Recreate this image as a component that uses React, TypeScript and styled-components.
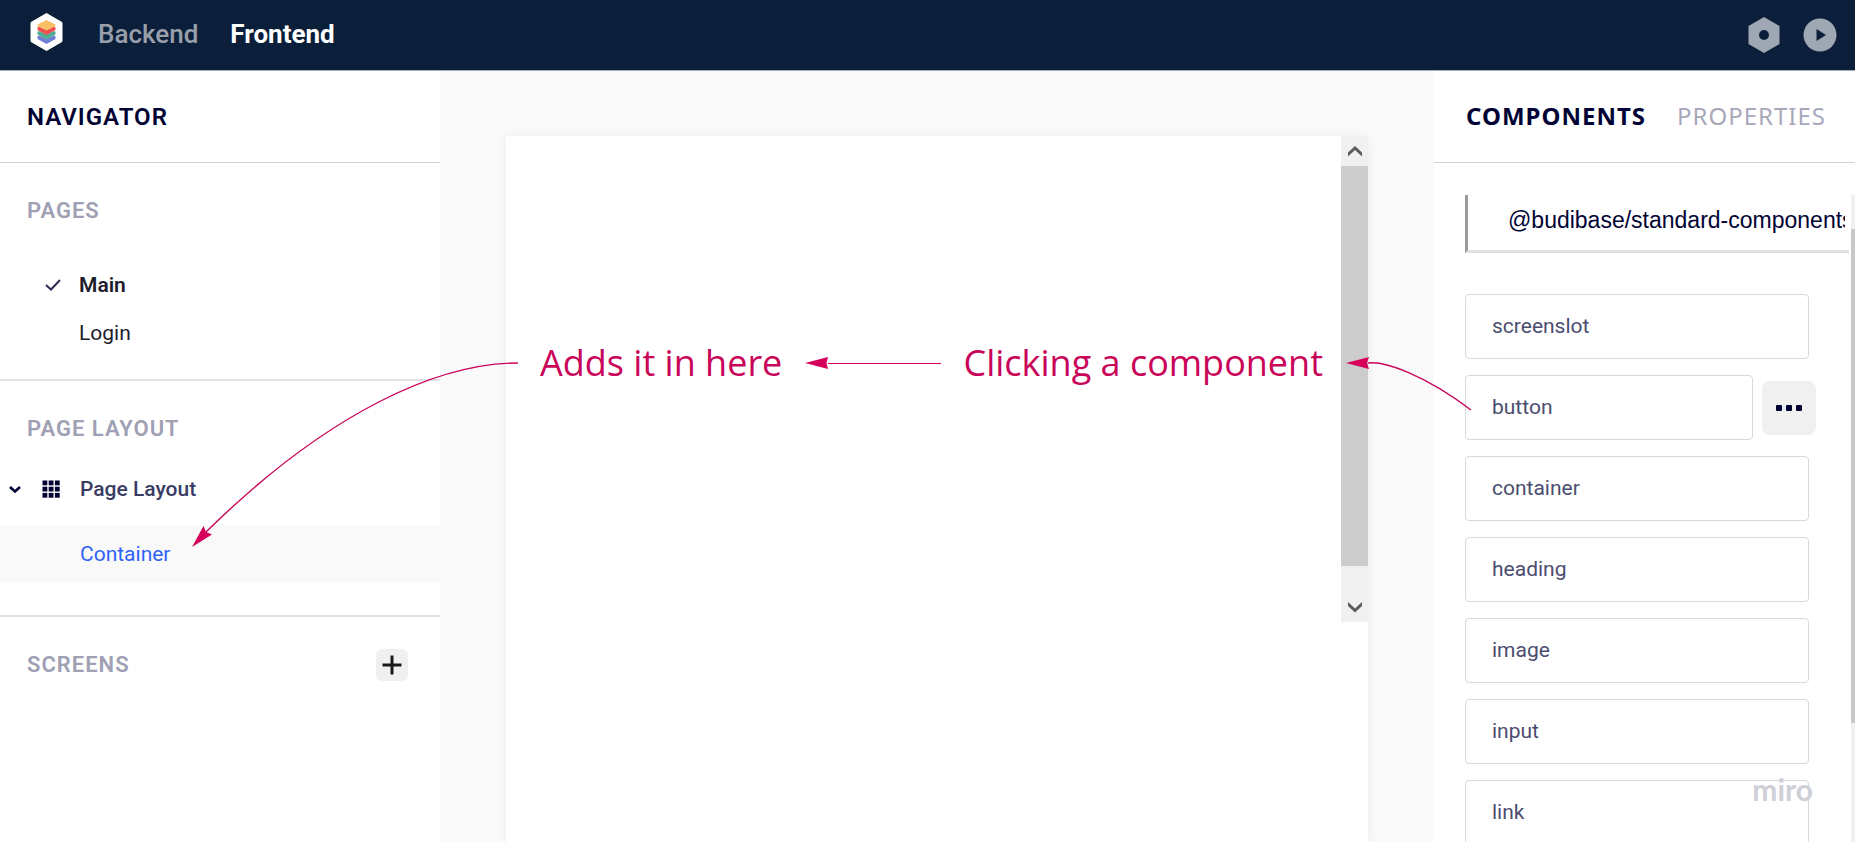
import React from 'react';
import styled, { createGlobalStyle } from 'styled-components';

const ink = '#000333';
const line = '#d8d8d8';
const pink = '#d6005c';
const pinkText = '#c9055a';

const GlobalStyle = createGlobalStyle`
  *, *::before, *::after { box-sizing: border-box; }
  body {
    margin: 0;
    font-family: Roboto, sans-serif;
    color: ${ink};
    background: #fafafa;
  }
  button, select { font: inherit; color: inherit; margin: 0; }
  button { border: 0; background: none; padding: 0; cursor: pointer; }
  h2, ul { margin: 0; padding: 0; list-style: none; }
`;

const Page = styled.div`
  position: relative;
  display: flex;
  flex-direction: column;
  height: 100vh;
  overflow: hidden;
`;

const TopBar = styled.header`
  display: flex;
  align-items: center;
  flex: none;
  height: 71px;
  padding: 0 18px 0 30px;
  background: #0c1f3a;
  border-bottom: 1px solid #a3adbd;
`;

const LogoLink = styled.a`
  display: flex;
  height: 38px;
  margin-right: 35px;
  margin-bottom: 6px;
`;

const TopNav = styled.nav`
  display: flex;
  flex: 1;
  gap: 32px;
  padding-bottom: 2px;
`;

const TopLink = styled.a<{ $active?: boolean }>`
  font-size: 26px;
  line-height: 32px;
  font-weight: ${p => (p.$active ? 700 : 500)};
  color: ${p => (p.$active ? '#ffffff' : '#989fab')};
  text-decoration: none;
`;

const TopActions = styled.div`
  display: flex;
  align-items: center;
  gap: 23px;
`;

const IconButton = styled.button`
  display: flex;
`;

const Body = styled.div`
  display: flex;
  flex: 1;
  min-height: 0;
`;

const Sidebar = styled.aside`
  flex: none;
  width: 440px;
  background: #ffffff;
`;

const PanelHead = styled.div`
  display: flex;
  align-items: center;
  height: 92px;
  padding: 0 27px;
  border-bottom: 1px solid #d2d2d2;
`;

const PanelTitle = styled.h2`
  font-size: 24px;
  line-height: 32px;
  font-weight: 600;
  letter-spacing: 1px;
`;

const Section = styled.section`
  border-bottom: 2px solid #e2e2e2;
  &:last-child { border-bottom: 0; }
`;

const SectionHead = styled.div`
  display: flex;
  align-items: center;
  justify-content: space-between;
  height: 64px;
  padding: 32px 32px 0 27px;
`;

const SectionTitle = styled.h2`
  font-size: 22px;
  line-height: 28px;
  font-weight: 600;
  letter-spacing: 1px;
  color: #9fa0b3;
`;

const AddButton = styled.button`
  display: flex;
  align-items: center;
  justify-content: center;
  width: 32px;
  height: 32px;
  border-radius: 6px;
  background: #f0f0f0;
`;

const PageList = styled.ul`
  display: flex;
  flex-direction: column;
  padding: 34px 0 22px;
`;

const PageItem = styled.button<{ $active?: boolean }>`
  display: grid;
  grid-template-columns: 18px 1fr;
  gap: 17px;
  align-items: center;
  width: 100%;
  height: 48px;
  padding-left: 44px;
  text-align: left;
  font-size: 21px;
  font-weight: ${p => (p.$active ? 600 : 400)};
  color: #1c1c2c;
`;

const Tree = styled.ul`
  display: flex;
  flex-direction: column;
  gap: 8px;
  padding: 15px 0 33px;
`;

const TreeNode = styled.button<{ $selected?: boolean }>`
  display: grid;
  grid-template-columns: 14px 18px 1fr;
  column-gap: 20px;
  align-items: center;
  width: 100%;
  height: 57px;
  padding-left: 8px;
  text-align: left;
  font-size: 21px;
  font-weight: ${p => (p.$selected ? 400 : 500)};
  color: ${p => (p.$selected ? '#2f62f5' : '#393c63')};
  background: ${p => (p.$selected ? '#f9f9f9' : 'transparent')};
`;

const Workspace = styled.main`
  display: flex;
  flex: 1;
  min-width: 0;
  padding: 65px 66px 0;
  background: #fafafa;
`;

const Preview = styled.div`
  display: flex;
  justify-content: flex-end;
  align-items: flex-start;
  flex: 1;
  background: #ffffff;
  box-shadow: 0 0 12px rgba(0, 0, 0, 0.06);
`;

const ScrollTrack = styled.div`
  display: flex;
  flex-direction: column;
  width: 27px;
  height: 486px;
  background: #f0f0f0;
`;

const ScrollArrow = styled.button`
  display: flex;
  align-items: center;
  justify-content: center;
  height: 30px;
`;

const ScrollThumb = styled.div`
  height: 400px;
  margin-bottom: auto;
  background: #cccccc;
`;

const Inspector = styled.aside`
  display: flex;
  flex-direction: column;
  flex: none;
  width: 421px;
  background: #ffffff;
`;

const Tabs = styled.div`
  display: flex;
  align-items: center;
  gap: 31px;
  flex: none;
  height: 92px;
  padding: 0 0 2px 32px;
  border-bottom: 1px solid #d2d2d2;
`;

const Tab = styled.button<{ $active?: boolean }>`
  font-family: "Noto Sans", sans-serif;
  font-size: 24px;
  line-height: 32px;
  letter-spacing: 1px;
  font-weight: ${p => (p.$active ? 700 : 400)};
  color: ${p => (p.$active ? ink : '#a7a8ba')};
`;

const Scroller = styled.div`
  display: flex;
  flex: 1;
  min-height: 0;
  margin-top: 32px;
  overflow: hidden;
`;

const ScrollerContent = styled.div`
  flex: 1;
  min-width: 0;
  padding: 0 2px 0 31px;
`;

const SourceSelect = styled.select`
  display: block;
  appearance: none;
  width: 100%;
  height: 58px;
  padding: 0 4px 5px 40px;
  border: 0 solid #e0e0e0;
  border-width: 0 0 3px 3px;
  border-left-color: #9a9a9a;
  border-radius: 0;
  background: #ffffff;
  font-family: "Liberation Sans", sans-serif;
  font-size: 23px;
  overflow: hidden;
`;

const CardList = styled.ul`
  display: flex;
  flex-direction: column;
  gap: 16px;
  padding: 41px 0 16px;
`;

const CardRow = styled.li`
  display: flex;
  align-items: center;
  gap: 9px;
`;

const Card = styled.button<{ $narrow?: boolean }>`
  flex: none;
  width: ${p => (p.$narrow ? 288 : 344)}px;
  height: 65px;
  padding: 0 26px 2px;
  border: 1px solid ${line};
  border-radius: 4px;
  background: #ffffff;
  text-align: left;
  font-size: 21px;
  color: #4b4d70;
`;

const MoreButton = styled.button`
  display: flex;
  align-items: center;
  justify-content: center;
  width: 54px;
  height: 54px;
  border-radius: 8px;
  background: #f0f0f0;
`;

const SideTrack = styled.div`
  width: 4px;
  padding-top: 34px;
  background: #f1f1f1;
`;

const SideThumb = styled.div`
  height: 494px;
  background: #c8c8c8;
`;

const Annotations = styled.div`
  position: absolute;
  top: 338px;
  left: 190px;
  right: 383px;
  display: flex;
  align-items: flex-start;
  pointer-events: none;
  svg { display: block; flex: none; overflow: visible; }
`;

const Note = styled.span`
  flex: none;
  padding: 0 23px 0 22px;
  font-family: "Open Sans", "Noto Sans", sans-serif;
  font-size: 36px;
  line-height: 50px;
  white-space: nowrap;
  color: ${pinkText};
`;

const StraightArrow = styled.span`
  display: flex;
  align-items: center;
  flex: 1;
  height: 50px;
`;

const ArrowLine = styled.span`
  flex: 1;
  height: 1px;
  background: ${pink};
`;

const Watermark = styled.span`
  position: absolute;
  right: 42px;
  bottom: 35px;
  font-family: Lato, sans-serif;
  font-size: 30px;
  font-weight: 700;
  line-height: 36px;
  color: #cfcfd8;
`;

const Logo = () => (
  <svg width="33" height="38" viewBox="0 0 33 38" aria-hidden="true">
    <path d="M16.5 0.500L32 9.500V28.500L16.500 37.500L1 28.500V9.500Z" fill="#fff" stroke="#fff" strokeLinejoin="round" />
    <path d="M7.500 23.500L9 22.500L16.500 26L24 22.500L25.500 23.500V26L16.500 31L7.500 26Z" fill="#6f7fd6" />
    <path d="M7.500 19L9 18L16.500 21.500L24 18L25.500 19V21.500L16.500 26.500L7.500 21.500Z" fill="#4fae92" />
    <path d="M7.500 14.500L9 13.500L16.500 17L24 13.500L25.500 14.500V17L16.500 22L7.500 17Z" fill="#ee4f4f" />
    <path d="M16.500 7L25.500 11.500V13L16.500 17.500L7.500 13V11.500Z" fill="#f8bf66" />
  </svg>
);

const SettingsIcon = () => (
  <svg width="32" height="36" viewBox="0 0 32 36" aria-hidden="true">
    <path fillRule="evenodd" d="M16 0L31.500 9V27L16 36L0.500 27V9ZM16 13A5 5 0 1 0 16 23A5 5 0 1 0 16 13Z" fill="#a0a7b4" />
  </svg>
);

const PlayIcon = () => (
  <svg width="34" height="34" viewBox="0 0 34 34" aria-hidden="true">
    <path fillRule="evenodd" d="M17 0.500A16.500 16.500 0 1 0 17 33.500A16.500 16.500 0 1 0 17 0.500ZM13.500 11L23 17L13.500 23Z" fill="#a0a7b4" />
  </svg>
);

const CheckIcon = () => (
  <svg width="18" height="14" viewBox="0 0 18 14" aria-hidden="true">
    <path d="M2 7L7 11.500L16 2" fill="none" stroke="#2b2d52" strokeWidth="2" />
  </svg>
);

const ChevronIcon = () => (
  <svg width="14" height="10" viewBox="0 0 14 10" aria-hidden="true">
    <path d="M2 3L7 7.500L12 3" fill="none" stroke={ink} strokeWidth="2.600" />
  </svg>
);

const GridIcon = () => (
  <svg width="18" height="18" viewBox="0 0 18 18" aria-hidden="true">
    {[0, 1, 2].flatMap(r =>
      [0, 1, 2].map(c => (
        <rect key={`${r}${c}`} x={0.5 + c * 6.2} y={0.5 + r * 6.2} width="4.800" height="4.800" fill={ink} />
      ))
    )}
  </svg>
);

const PlusIcon = () => (
  <svg width="20" height="20" viewBox="0 0 20 20" aria-hidden="true">
    <path d="M10 0.500V19.500M0.500 10H19.500" stroke="#1a1a1a" strokeWidth="3" />
  </svg>
);

const DotsIcon = () => (
  <svg width="28" height="8" viewBox="0 0 28 8" aria-hidden="true">
    {[1, 11, 21].map(x => (
      <rect key={x} x={x} y="1" width="6" height="6" rx="1" fill={ink} />
    ))}
  </svg>
);

const ScrollChevron = ({ down }: { down?: boolean }) => (
  <svg width="14" height="12" viewBox="0 0 14 12" aria-hidden="true">
    <path d={down ? 'M0 1V5L7 11.500L14 5V1L7 7.500Z' : 'M0 11.500V7.500L7 1L14 7.500V11.500L7 5Z'} fill="#5c5c5c" />
  </svg>
);

const pages = ['Main', 'Login'];
const components = ['screenslot', 'button', 'container', 'heading', 'image', 'input', 'link'];

export default function App() {
  return (
    <Page>
      <GlobalStyle />
      <TopBar>
        <LogoLink href="#" aria-label="Home"><Logo /></LogoLink>
        <TopNav>
          <TopLink href="#backend">Backend</TopLink>
          <TopLink href="#frontend" $active>Frontend</TopLink>
        </TopNav>
        <TopActions>
          <IconButton aria-label="Settings"><SettingsIcon /></IconButton>
          <IconButton aria-label="Preview"><PlayIcon /></IconButton>
        </TopActions>
      </TopBar>

      <Body>
        <Sidebar>
          <PanelHead><PanelTitle>NAVIGATOR</PanelTitle></PanelHead>
          <Section>
            <SectionHead><SectionTitle>PAGES</SectionTitle></SectionHead>
            <PageList>
              {pages.map((name, i) => (
                <li key={name}>
                  <PageItem $active={i === 0}>
                    <span>{i === 0 && <CheckIcon />}</span>
                    {name}
                  </PageItem>
                </li>
              ))}
            </PageList>
          </Section>
          <Section>
            <SectionHead><SectionTitle>PAGE LAYOUT</SectionTitle></SectionHead>
            <Tree>
              <li>
                <TreeNode><ChevronIcon /><GridIcon />Page Layout</TreeNode>
              </li>
              <li>
                <TreeNode $selected><span /><span />Container</TreeNode>
              </li>
            </Tree>
          </Section>
          <Section>
            <SectionHead>
              <SectionTitle>SCREENS</SectionTitle>
              <AddButton aria-label="Add screen"><PlusIcon /></AddButton>
            </SectionHead>
          </Section>
        </Sidebar>

        <Workspace>
          <Preview>
            <ScrollTrack>
              <ScrollArrow aria-label="Scroll up"><ScrollChevron /></ScrollArrow>
              <ScrollThumb />
              <ScrollArrow aria-label="Scroll down"><ScrollChevron down /></ScrollArrow>
            </ScrollTrack>
          </Preview>
        </Workspace>

        <Inspector>
          <Tabs role="tablist">
            <Tab role="tab" aria-selected="true" $active>COMPONENTS</Tab>
            <Tab role="tab" aria-selected="false">PROPERTIES</Tab>
          </Tabs>
          <Scroller>
            <ScrollerContent>
              <SourceSelect aria-label="Component library">
                <option>@budibase/standard-components</option>
              </SourceSelect>
              <CardList>
                {components.map(name => (
                  <CardRow key={name}>
                    <Card $narrow={name === 'button'}>{name}</Card>
                    {name === 'button' && (
                      <MoreButton aria-label="More options"><DotsIcon /></MoreButton>
                    )}
                  </CardRow>
                ))}
              </CardList>
            </ScrollerContent>
            <SideTrack><SideThumb /></SideTrack>
          </Scroller>
        </Inspector>
      </Body>

      <Annotations>
        <svg width="328" height="210" viewBox="190 338 328 210" aria-hidden="true">
          <path d="M518 363C440 363 330 410 206 532" fill="none" stroke={pinkText} strokeWidth="1.400" />
          <path d="M192 547L203.500 526L206 532L212 534.500Z" fill={pink} />
        </svg>
        <Note>Adds it in here</Note>
        <StraightArrow>
          <svg width="23" height="12" viewBox="0 0 23 12" aria-hidden="true">
            <path d="M0 6L23 0L21.500 6L23 12Z" fill={pink} />
          </svg>
          <ArrowLine />
        </StraightArrow>
        <Note>Clicking a component</Note>
        <svg width="126" height="75" viewBox="1346 338 126 75" aria-hidden="true">
          <path d="M1368 363C1385 361 1425 375 1471 410" fill="none" stroke={pinkText} strokeWidth="1.400" />
          <path d="M1346 363L1369 357L1367 363L1369 369Z" fill={pink} />
        </svg>
      </Annotations>
      <Watermark>miro</Watermark>
    </Page>
  );
}
